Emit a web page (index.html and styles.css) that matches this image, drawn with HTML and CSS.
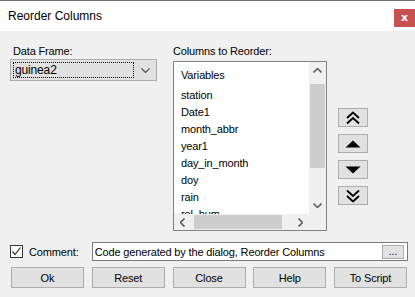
FILE: index.html
```html
<!DOCTYPE html>
<html lang="en">

<head>
    <meta charset="UTF-8">
    <title>Reorder Columns</title>
    <link rel="stylesheet" href="styles.css">
</head>

<body>
    <div class="dialog">
        <!-- Title bar -->
        <div class="titlebar">
            <span class="title">Reorder Columns</span>
            <button class="close">x</button>
        </div>

        <div class="content">
            <div class="top">
                <!-- Data frame selector -->
                <div class="col-left">
                    <div class="label">Data Frame:</div>
                    <div class="combo">
                        <span class="combo-text">guinea2</span>
                        <svg class="chevron" width="9" height="5" viewBox="0 0 9 5">
                            <polyline points="0.5,0.5 4.5,4.5 8.5,0.5" fill="none" stroke="#555" stroke-width="1.2" />
                        </svg>
                    </div>
                </div>

                <!-- Columns list -->
                <div class="col-mid">
                    <div class="label">Columns to Reorder:</div>
                    <div class="listbox">
                        <div class="list-area">
                            <div class="list-items">
                                <div class="list-header">Variables</div>
                                <div class="item">station</div>
                                <div class="item">Date1</div>
                                <div class="item">month_abbr</div>
                                <div class="item">year1</div>
                                <div class="item">day_in_month</div>
                                <div class="item">doy</div>
                                <div class="item">rain</div>
                                <div class="item">rel_hum</div>
                            </div>
                            <div class="vscroll">
                                <svg class="sarrow" width="9" height="5" viewBox="0 0 9 5">
                                    <polyline points="0.5,4.5 4.5,0.5 8.5,4.5" fill="none" stroke="#606060" stroke-width="1.6" />
                                </svg>
                                <div class="vthumb"></div>
                                <div class="vspace"></div>
                                <svg class="sarrow" width="9" height="5" viewBox="0 0 9 5">
                                    <polyline points="0.5,0.5 4.5,4.5 8.5,0.5" fill="none" stroke="#606060" stroke-width="1.6" />
                                </svg>
                            </div>
                        </div>
                        <div class="hbar">
                            <div class="hscroll">
                                <svg class="sarrow" width="5" height="9" viewBox="0 0 5 9">
                                    <polyline points="4.5,0.5 0.5,4.5 4.5,8.5" fill="none" stroke="#606060" stroke-width="1.6" />
                                </svg>
                                <div class="hthumb"></div>
                                <div class="hspace"></div>
                                <svg class="sarrow" width="5" height="9" viewBox="0 0 5 9">
                                    <polyline points="0.5,0.5 4.5,4.5 0.5,8.5" fill="none" stroke="#606060" stroke-width="1.6" />
                                </svg>
                            </div>
                            <div class="corner"></div>
                        </div>
                    </div>
                </div>

                <!-- Move buttons -->
                <div class="col-right">
                    <button class="move">
                        <svg width="16" height="14" viewBox="0 0 16 14">
                            <polyline points="2,7 8,1.5 14,7" fill="none" stroke="#000" stroke-width="1.8" />
                            <polyline points="2,12.5 8,7 14,12.5" fill="none" stroke="#000" stroke-width="1.8" />
                        </svg>
                    </button>
                    <button class="move">
                        <svg width="16" height="8" viewBox="0 0 16 8">
                            <polygon points="0.5,7.5 8,0.5 15.5,7.5" fill="#000" />
                        </svg>
                    </button>
                    <button class="move">
                        <svg width="16" height="8" viewBox="0 0 16 8">
                            <polygon points="0.5,0.5 8,7.5 15.5,0.5" fill="#000" />
                        </svg>
                    </button>
                    <button class="move">
                        <svg width="16" height="14" viewBox="0 0 16 14">
                            <polyline points="2,1.5 8,7 14,1.5" fill="none" stroke="#000" stroke-width="1.8" />
                            <polyline points="2,7 8,12.5 14,7" fill="none" stroke="#000" stroke-width="1.8" />
                        </svg>
                    </button>
                </div>
            </div>

            <!-- Comment row -->
            <div class="comment-row">
                <span class="checkbox">
                    <svg width="11" height="11" viewBox="0 0 11 11">
                        <polyline points="1.5,5.5 4,8.5 9.5,1.5" fill="none" stroke="#333" stroke-width="1.2" />
                    </svg>
                </span>
                <span class="comment-label">Comment:</span>
                <div class="comment-box">
                    <span class="comment-text">Code generated by the dialog, Reorder Columns</span>
                    <button class="dots">...</button>
                </div>
            </div>

            <!-- Bottom buttons -->
            <div class="buttons">
                <button class="btn">Ok</button>
                <button class="btn">Reset</button>
                <button class="btn">Close</button>
                <button class="btn">Help</button>
                <button class="btn">To Script</button>
            </div>
        </div>
    </div>
</body>

</html>
```

FILE: styles.css
```css
body {
    margin: 0;
    font-family: "Liberation Sans", Arial, sans-serif;
    font-size: 11px;
    letter-spacing: -0.15px;
    color: #000;
}

.dialog {
    width: 415px;
    height: 297px;
    background: #f0f0f0;
    overflow: hidden;
}

.titlebar {
    height: 30px;
    background: #fff;
    border-top: 1px solid #6e6e6e;
    display: flex;
    justify-content: space-between;
    align-items: flex-start;
}

.title {
    margin-left: 8px;
    margin-top: 8px;
    font-size: 12px;
    letter-spacing: 0;
}

.close {
    width: 21px;
    height: 18px;
    margin-top: 8px;
    padding: 0;
    border: none;
    background: #c75050;
    color: #fff;
    font-family: "DejaVu Sans", sans-serif;
    font-weight: bold;
    font-size: 11px;
    line-height: 16px;
}

.content {
    padding: 12px 7px 0 10px;
}

.top {
    display: flex;
}

.label {
    height: 16px;
    line-height: 17px;
    margin-left: 3px;
}

/* Data frame */

.col-left {
    width: 147px;
}

.combo {
    height: 20px;
    border: 1px solid #adadad;
    background: #e1e1e1;
    display: flex;
    align-items: center;
    justify-content: space-between;
    padding: 0 6px 0 2px;
}

.combo-text {
    width: 118px;
    height: 14px;
    line-height: 14px;
    border: 1px dotted #000;
    padding-left: 1px;
    font-size: 12px;
}

.chevron {
    display: block;
}

/* List */

.col-mid {
    width: 154px;
    margin-left: 16px;
}

.col-mid .label {
    margin-left: 0;
    height: 18px;
}

.listbox {
    height: 168px;
    border: 1px solid #828282;
    background: #fff;
    display: flex;
    flex-direction: column;
}

.list-area {
    flex: 1;
    display: flex;
    overflow: hidden;
}

.list-items {
    flex: 1;
    padding-left: 7px;
    padding-top: 1px;
    overflow: hidden;
}

.list-header {
    height: 24px;
    line-height: 24px;
}

.item {
    height: 17px;
    line-height: 17px;
}

.vscroll {
    width: 17px;
    background: #f0f0f0;
    display: flex;
    flex-direction: column;
    align-items: center;
}

.vscroll .sarrow {
    margin: 6px 0;
}

.vthumb {
    width: 15px;
    height: 84px;
    margin-top: 5px;
    background: #cdcdcd;
}

.vspace {
    flex: 1;
}

.hbar {
    height: 16px;
    display: flex;
}

.hscroll {
    flex: 1;
    background: #f0f0f0;
    display: flex;
    align-items: center;
}

.hscroll .sarrow {
    margin: 0 6px;
}

.hthumb {
    width: 88px;
    height: 14px;
    margin-left: 3px;
    background: #cdcdcd;
}

.hspace {
    flex: 1;
}

.corner {
    width: 17px;
    background: #f0f0f0;
}

/* Move buttons */

.col-right {
    margin-left: 11px;
    padding-top: 65px;
    display: flex;
    flex-direction: column;
    gap: 7px;
}

.move {
    width: 30px;
    height: 19px;
    padding: 0;
    border: 1px solid #adadad;
    background: #e1e1e1;
    display: flex;
    align-items: center;
    justify-content: center;
}

.move svg {
    display: block;
}

/* Comment */

.comment-row {
    display: flex;
    align-items: center;
    margin-top: 11px;
    height: 19px;
}

.checkbox {
    width: 11px;
    height: 11px;
    border: 1px solid #333;
    background: #fff;
    display: flex;
}

.comment-label {
    margin-left: 6px;
    width: 63px;
}

.comment-box {
    width: 314px;
    height: 17px;
    border: 1px solid #7a7a7a;
    background: #fff;
    display: flex;
    align-items: center;
    justify-content: space-between;
    padding-left: 2px;
}

.dots {
    width: 22px;
    height: 14px;
    margin-right: 3px;
    padding: 0;
    border: 1px solid #adadad;
    background: #e1e1e1;
    font-family: "Liberation Sans", Arial, sans-serif;
    font-size: 10px;
    line-height: 8px;
}

/* Bottom buttons */

.buttons {
    display: flex;
    justify-content: space-between;
    margin-top: 6px;
    padding-left: 1px;
    width: 396px;
}

.btn {
    width: 73px;
    height: 21px;
    padding: 0;
    border: 1px solid #adadad;
    background: #e1e1e1;
    font-family: "Liberation Sans", Arial, sans-serif;
    font-size: 11px;
    letter-spacing: -0.15px;
    color: #000;
}
```
